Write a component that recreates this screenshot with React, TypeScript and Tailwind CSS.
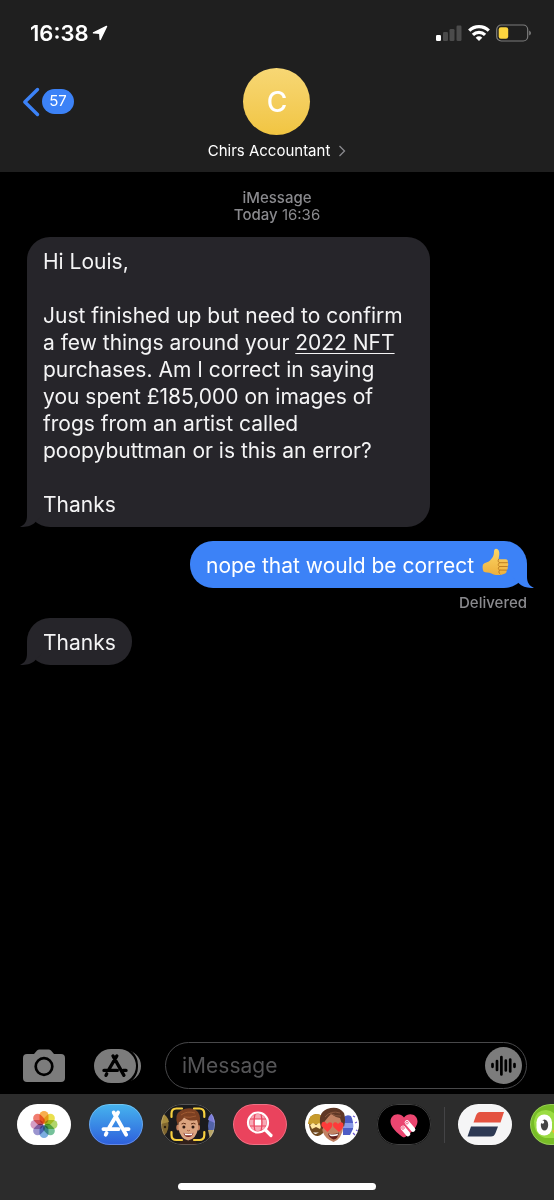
import React from "react";

interface BubbleProps {
  sent?: boolean;
  children: React.ReactNode;
}

function Bubble({ sent = false, children }: BubbleProps) {
  return (
    <div
      className={
        sent
          ? "relative ml-auto w-fit max-w-[403px] rounded-[23px] bg-[#3c82f7] px-4 pt-[11px] pb-[9px] text-[21px] leading-[27px] text-white"
          : "relative w-fit max-w-[403px] rounded-[23px] bg-[#26252a] px-4 pt-[11px] pb-[9px] text-[21px] leading-[27px] text-[#f4f4f5]"
      }
    >
      {children}
      <svg
        viewBox="0 0 24 24"
        aria-hidden="true"
        className={
          sent
            ? "absolute -right-[7px] bottom-0 h-6 w-6 -scale-x-100 text-[#3c82f7]"
            : "absolute -left-[7px] bottom-0 h-6 w-6 text-[#26252a]"
        }
      >
        <path d="M7 0V13C7 18 5 22 0 23.700C6 24.600 12 22.500 15 19.500L22 12V0Z" fill="currentColor" />
      </svg>
    </div>
  );
}

function ThumbsUp() {
  return (
    <svg viewBox="0 0 27 28" role="img" aria-label="thumbs up" className="-mt-1 mr-0.5 ml-2 inline-block h-7 w-[27px] align-top">
      <defs>
        <linearGradient id="thumb" x1="0" y1="0" x2="0" y2="1">
          <stop offset="0" stopColor="#fbd667" />
          <stop offset="1" stopColor="#eeb03c" />
        </linearGradient>
      </defs>
      <path
        d="M1 16.500C2.500 14.500 6 14.500 8 12.500C10.500 10 12 7.500 12 4C12 1.500 13 .7 14.200 .8C16.500 1 17.600 3.500 17.300 6.500L16.600 11.200H23.500C25.500 11.200 26.400 13 25.600 14.600C26.700 15.700 26.500 17.500 25.500 18.400C26.200 19.800 25.800 21.300 24.600 22C25 24 24 25.200 22.500 25.700C19 27.500 13 27.600 9.500 25.500C6.500 24.200 3.500 24.800 1.500 23.500C.5 21.500.3 18.500 1 16.500Z"
        fill="url(#thumb)"
      />
      <path
        d="M16.600 11.200C15.600 12.400 16 14.200 17.600 14.700H25.300M17.600 14.700C15.700 15.400 15.800 17.800 17.500 18.500H25.200M17.500 18.500C15.800 19.300 16 21.500 17.600 22.100H24.400M17.600 22.100C16.400 23 16.500 25 18 26"
        fill="none"
        stroke="#b9781f"
        strokeWidth=".9"
        strokeLinecap="round"
      />
    </svg>
  );
}

function AppStoreGlyph({ color }: { color: string }) {
  return (
    <g stroke={color} strokeWidth="3.600" strokeLinecap="round" fill="none">
      <path d="M2 -11L-6.500 3.500M-9 8.500L-9.800 10.200M-2.200 -11L9.700 10.200M-12 4.800H2.500M9 4.800H12" />
    </g>
  );
}

function StatusBar() {
  return (
    <div className="flex h-[34px] items-center justify-between pr-[23px] pl-[30px]">
      <div className="flex items-center gap-1">
        <span className="text-[22px] leading-6 font-semibold">16:38</span>
        <svg viewBox="0 0 16 16" aria-hidden="true" className="h-4 w-4">
          <path d="M14.500 1.500L1.500 7.800L7.800 8.200L8.200 14.500Z" fill="#fff" stroke="#fff" strokeWidth="1.500" strokeLinejoin="round" />
        </svg>
      </div>
      <div className="flex items-center gap-1.5">
        <svg viewBox="0 0 26 16" aria-label="Signal" role="img" className="h-4 w-[26px]">
          <rect x="0" y="10" width="5" height="6" rx="1.200" fill="#fff" />
          <rect x="7" y="7" width="5" height="9" rx="1.200" fill="#4b4b4b" />
          <rect x="13.500" y="4" width="5" height="12" rx="1.200" fill="#4b4b4b" />
          <rect x="20.500" y="0.500" width="5" height="15.500" rx="1.200" fill="#4b4b4b" />
        </svg>
        <svg viewBox="0 0 22 16" aria-label="Wi-Fi" role="img" className="h-4 w-[22px]">
          <g fill="none" stroke="#fff" strokeWidth="3.200">
            <path d="M1.200 5.700A14 14 0 0 1 20.800 5.700" />
            <path d="M4.900 9.800A8.700 8.700 0 0 1 17.100 9.800" />
          </g>
          <path d="M11 16L7.700 12.700A4.700 4.700 0 0 1 14.300 12.700Z" fill="#fff" />
        </svg>
        <svg viewBox="0 0 35 18" aria-label="Battery" role="img" className="h-[18px] w-[35px]">
          <rect x="0.700" y="1" width="31" height="16" rx="4.500" fill="none" stroke="#7d7d7d" strokeWidth="1.200" />
          <path d="M33.200 6.500Q35 7.500 35 9T33.200 11.500Z" fill="#7d7d7d" />
          <rect x="2.700" y="3.200" width="9.500" height="11.600" rx="2.200" fill="#fcd53f" />
        </svg>
      </div>
    </div>
  );
}

function Header() {
  return (
    <header className="bg-[#1f1f1f] pt-4 pb-[11px] text-white">
      <StatusBar />
      <div className="mt-[18px] grid grid-cols-[1fr_auto_1fr]">
        <button type="button" aria-label="Back, 57 unread" className="flex h-[67px] items-center gap-0.5 justify-self-start pl-[22px]">
          <svg viewBox="0 0 18 30" aria-hidden="true" className="h-[30px] w-[18px]">
            <path d="M15.500 2.500L2.800 15L15.500 27.500" fill="none" stroke="#3c82f7" strokeWidth="3.400" strokeLinecap="round" strokeLinejoin="round" />
          </svg>
          <span className="flex h-[25px] w-8 items-center justify-center rounded-full bg-[#3c82f7] text-[15px]">57</span>
        </button>
        <button type="button" className="flex flex-col items-center">
          <span className="flex h-[67px] w-[67px] items-center justify-center rounded-full bg-linear-to-b from-[#f7d774] to-[#f1c541] text-[28px] font-medium">
            C
          </span>
          <span className="mt-[5px] flex items-center gap-2 text-[15px] leading-[21px]">
            Chirs Accountant
            <svg viewBox="0 0 8 12" aria-hidden="true" className="h-3 w-2">
              <path d="M1.500 1L6.500 6L1.500 11" fill="none" stroke="#8a8a8e" strokeWidth="1.300" />
            </svg>
          </span>
        </button>
      </div>
    </header>
  );
}

function Composer() {
  return (
    <form className="flex items-center pr-[27px] pb-[5px] pl-[23px]" onSubmit={(e) => e.preventDefault()}>
      <button type="button" aria-label="Camera">
        <svg viewBox="0 0 42 33" className="block h-[33px] w-[42px]">
          <path
            d="M4 5H11L14 1.500Q15 .5 16.500 .5H25.500Q27 .5 28 1.500L31 5H38Q42 5 42 9V29Q42 33 38 33H4Q0 33 0 29V9Q0 5 4 5Z"
            fill="#7c7c7c"
          />
          <circle cx="21" cy="17.500" r="8.300" fill="none" stroke="#000" strokeWidth="2.700" />
        </svg>
      </button>
      <button type="button" aria-label="Apps" className="ml-[29px]">
        <svg viewBox="0 0 47 34" className="block h-[34px] w-[47px]">
          <rect x="5" y="1" width="42" height="32" rx="16" fill="#7c7c7c" />
          <rect x="-1" y="-2" width="45" height="38" rx="18" fill="#000" />
          <rect width="42" height="34" rx="17" fill="#7c7c7c" />
          <g transform="translate(21 17) scale(.92)">
            <AppStoreGlyph color="#000" />
          </g>
        </svg>
      </button>
      <div className="ml-6 flex h-[47px] min-w-0 flex-1 items-center rounded-full border border-[#48484a] pr-1 pl-4">
        <input
          type="text"
          aria-label="Message"
          placeholder="iMessage"
          className="min-w-0 flex-1 bg-transparent text-[21px] text-white outline-none placeholder:text-[#555557]"
        />
        <button type="button" aria-label="Record audio">
          <svg viewBox="0 0 37 37" className="block h-[37px] w-[37px]">
            <circle cx="18.500" cy="18.500" r="18.500" fill="#7c7c7c" />
            <path
              d="M7.500 17.200V19.800M12 14V23M16.400 10V27.500M20.800 13.500V23.500M25.200 12.500V24.500M29.500 17.200V19.800"
              stroke="#000"
              strokeWidth="2.700"
              strokeLinecap="round"
            />
          </svg>
        </button>
      </div>
    </form>
  );
}

function PhotosIcon() {
  const petals = ["#f7a335", "#e8dc35", "#a5cf55", "#62b98c", "#6aa3dc", "#8d86c9", "#cf8fbd", "#ee6a5c"];
  return (
    <>
      <rect width="54" height="41" fill="#fff" />
      {petals.map((color, i) => (
        <rect
          key={color}
          x="22.500"
          y="7"
          width="9"
          height="12.800"
          rx="4.500"
          fill={color}
          opacity=".88"
          transform={`rotate(${i * 45} 27 20.500)`}
          className="mix-blend-multiply"
        />
      ))}
    </>
  );
}

function AppStoreIcon() {
  return (
    <>
      <defs>
        <linearGradient id="store" x1="0" y1="0" x2="0" y2="1">
          <stop offset="0" stopColor="#46b4ee" />
          <stop offset="1" stopColor="#2e5fdc" />
        </linearGradient>
      </defs>
      <rect width="54" height="41" fill="url(#store)" />
      <g transform="translate(27 20) scale(1.050)">
        <AppStoreGlyph color="#fff" />
      </g>
    </>
  );
}

function MemojiCameraIcon() {
  return (
    <>
      <rect width="54" height="41" fill="#1b1b1d" />
      <ellipse cx="1" cy="21" rx="6.500" ry="11" fill="#80672f" />
      <path d="M0 10Q6 10 8 18L0 20Z" fill="#a68b3e" />
      <circle cx="4" cy="23" r="1.200" fill="#2c2010" />
      <ellipse cx="52.500" cy="22" rx="5.500" ry="10" fill="#5263a9" />
      <path d="M47 16Q48 9 54 9V19Z" fill="#7b7cd8" />
      <path d="M47 26H54V35H49Z" fill="#b7a465" />
      <path d="M20 35Q27 31 34 35L36 41H18Z" fill="#32201a" />
      <ellipse cx="17" cy="23.500" rx="1.700" ry="3" fill="#c5805f" />
      <ellipse cx="37.300" cy="23.500" rx="1.700" ry="3" fill="#c5805f" />
      <path d="M17.500 17Q18 11 27 11T37 17V25Q35 35 27.200 36.500Q19.500 35 17.500 25Z" fill="#dba480" />
      <path d="M16.500 21Q13 10 20 6.500Q30 1.500 37 8Q40.500 13 38 22Q36.800 19 36 16Q28 18 23 13.500Q21 17 18.500 18Q17 18 16.500 21Z" fill="#7c4022" />
      <path d="M20 11Q26 6.500 34 9M23 13Q29 14 35 12" fill="none" stroke="#a05a32" strokeWidth="1" />
      <path d="M20.500 20Q22.500 18.500 25 20M30 20Q32.500 18.500 34.500 20" fill="none" stroke="#643119" strokeWidth="1" />
      <circle cx="22.900" cy="23" r="1.500" fill="#301a12" />
      <circle cx="32" cy="23" r="1.500" fill="#301a12" />
      <path d="M26 26.200Q27.500 27.500 29 26.200" fill="none" stroke="#a95f45" strokeWidth="1" />
      <path d="M22.500 28.800Q27.500 30.500 32.500 28.800Q31.500 33 27.300 33T22.500 28.800Z" fill="#7c2823" />
      <path d="M23.300 29.200Q27.500 30.700 31.700 29.200L30.800 31.200H24.200Z" fill="#fff" />
      <path
        d="M10.500 13V9.500Q10.500 4.500 15.500 4.500H21M33 4.500H38.300Q43.300 4.500 43.300 9.500V13M43.300 28V31Q43.300 36 38.300 36H33M21 36H15.500Q10.500 36 10.500 31V28"
        fill="none"
        stroke="#f6cf3f"
        strokeWidth="2.200"
        strokeLinecap="round"
      />
    </>
  );
}

function ImagesIcon() {
  return (
    <>
      <rect width="54" height="41" fill="#ea435d" />
      <circle cx="25" cy="18.500" r="8.500" fill="#f7a9b5" />
      <path d="M22 15H28V22H22Z" fill="#fff" />
      <path d="M22 10Q20 18.500 22 27M28 10Q30 18.500 28 27M17 15H33M17 22H33" fill="none" stroke="#ea435d" strokeWidth="1.200" />
      <circle cx="25" cy="18.500" r="10" fill="none" stroke="#fff" strokeWidth="2.200" />
      <path d="M32.500 26L38 31.500" stroke="#fff" strokeWidth="3.200" strokeLinecap="round" />
    </>
  );
}

function MemojiStickersIcon() {
  return (
    <>
      <rect width="54" height="41" fill="#fff" />
      <path d="M4 19Q3 12 11 10Q18 10 19 20V28Q14 34 9 31Q4 27 4 19Z" fill="#70491f" />
      <path d="M3 19Q4 10 12 10Q18 10 19 18L17 20H3Z" fill="#c79b2c" />
      <path d="M5 21L8 19L11 21L14 19L17 21L15 25L11 23L7 25Z" fill="#ffe6a0" />
      <path d="M8 28Q11 29 14 28Q12 30 10 30Z" fill="#fff" />
      <path d="M38 14Q41 10 46 12Q49 18 48 25L45 31H38Z" fill="#4e5dc6" />
      <path d="M38 19H48V24H38Z" fill="#8b9de9" />
      <path d="M48 12L50 13M50 19L52 18M51 26L53 27M48 29L50 31" stroke="#7058d1" strokeWidth="1.300" />
      <path d="M17 18Q17 9 28 9Q39 10 38.500 22Q37 35 28.500 38Q20 35 17.500 27Z" fill="#c28263" />
      <path d="M16 24Q12 9 22 5Q33 1 39 9Q41 15 39 23Q36 19 35 14Q30 13 26 10Q23 13 20 17Q18 19 18 25Z" fill="#5f3826" />
      <path d="M20 13Q26 6 35 9M25 9Q31 13 36 12" fill="none" stroke="#8a583f" strokeWidth="1" />
      <path d="M22.500 28L16.500 22Q16 18 19 17.800Q21 18 22 20Q24 17 27 19Q29 22 22.500 28Z" fill="#ff3b3a" />
      <path d="M34 28L28.500 23Q27 19 30 18.300Q32 18 33 20Q35 17 38 19Q40 23 34 28Z" fill="#ff3b3a" />
      <path d="M23 29.500Q29 31 34 28.500Q33 35 28.500 35.500Q24 34 23 29.500Z" fill="#65211e" />
      <path d="M24 30Q29 31.300 33.300 29.500L32.500 31.500Q28 33 25 31.800Z" fill="#fff" />
    </>
  );
}

function DigitalTouchIcon() {
  return (
    <>
      <rect width="54" height="41" fill="#000" />
      <path
        d="M27 33.500C25 33 13.500 24.500 13.500 17.500C13.500 10 22.500 7.500 27 13.500C31.500 7.500 40.500 10 40.500 17.500C40.500 24.500 29 33 27 33.500Z"
        fill="#eb4670"
      />
      <g strokeLinecap="round" stroke="#fff">
        <path d="M30 18.500L36 25.500" strokeWidth="4.700" />
        <path d="M26 24L31 30" strokeWidth="4.700" />
      </g>
      <circle cx="30" cy="18.700" r="1.300" fill="none" stroke="#eb4670" strokeWidth=".8" />
      <circle cx="26" cy="24" r="1.300" fill="none" stroke="#eb4670" strokeWidth=".8" />
    </>
  );
}

function StripesIcon() {
  return (
    <>
      <rect width="54" height="41" fill="#f5f5f6" />
      <path d="M22 8H46L42.500 18.500H15.500L18 11.500Q19.300 8 22 8Z" fill="#e45341" />
      <path d="M13 22.500H40L37.500 29Q36.200 32.500 33 32.500H9.500Z" fill="#2d3953" />
    </>
  );
}

function OwlIcon() {
  return (
    <>
      <rect width="54" height="41" fill="#78bd27" />
      <path d="M4 17Q6 6 16 6Q24 7 27 13Q30 7 38 6Q49 7 50 18Q50 32 38 34H15Q4 31 4 17Z" fill="#9bdc42" />
      <rect x="6.500" y="10.500" width="15.500" height="21" rx="7.700" fill="#fff" />
      <rect x="32" y="10.500" width="15.500" height="21" rx="7.700" fill="#fff" />
      <ellipse cx="14.500" cy="21" rx="3.700" ry="5.500" fill="#454545" />
      <ellipse cx="39" cy="21" rx="3.700" ry="5.500" fill="#454545" />
      <circle cx="12.500" cy="18" r="1.700" fill="#fff" />
      <path d="M22 27Q27 22 32 27L27 33Z" fill="#f3b52b" />
    </>
  );
}

function AppButton({ label, children }: { label: string; children: React.ReactNode }) {
  return (
    <button type="button" aria-label={label} className="relative h-[41px] w-[54px] shrink-0 overflow-hidden rounded-full">
      <svg viewBox="0 0 54 41" className="block h-full w-full">
        {children}
        <rect x=".5" y=".5" width="53" height="40" rx="20" fill="none" stroke="#fff" strokeOpacity=".25" />
      </svg>
    </button>
  );
}

function AppDrawer() {
  return (
    <nav aria-label="iMessage apps" className="overflow-hidden bg-[#2c2c2c] pt-2.5 pb-2.5">
      <div className="flex items-center pl-[17px]">
        <div className="flex shrink-0 gap-[18px]">
          <AppButton label="Photos"><PhotosIcon /></AppButton>
          <AppButton label="App Store"><AppStoreIcon /></AppButton>
          <AppButton label="Memoji"><MemojiCameraIcon /></AppButton>
          <AppButton label="Images"><ImagesIcon /></AppButton>
          <AppButton label="Memoji Stickers"><MemojiStickersIcon /></AppButton>
          <AppButton label="Digital Touch"><DigitalTouchIcon /></AppButton>
        </div>
        <div className="mx-[13px] h-9 w-px shrink-0 bg-[#444446]" />
        <div className="flex shrink-0 gap-[18px]">
          <AppButton label="Sports"><StripesIcon /></AppButton>
          <AppButton label="Owl Stickers"><OwlIcon /></AppButton>
        </div>
      </div>
      <div className="mx-auto mt-[38px] h-[7px] w-[198px] rounded-full bg-white" />
    </nav>
  );
}

export default function App() {
  return (
    <div className="flex min-h-screen flex-col bg-black font-['Inter','Liberation_Sans',sans-serif]">
      <Header />
      <main className="flex-1 px-[27px] pt-[17px]">
        <div className="mb-3.5 text-center text-[15px] leading-[17px] text-[#8a8a8e]">
          <p className="font-medium">iMessage</p>
          <p>
            <span className="font-medium">Today</span> 16:36
          </p>
        </div>
        <Bubble>
          <p>Hi Louis,</p>
          <p className="my-[27px]">
            Just finished up but need to confirm a few things around your{" "}
            <a href="#event" className="underline decoration-1 underline-offset-3">2022 NFT</a> purchases. Am I correct in
            saying you spent £185,000 on images of frogs from an artist called poopybuttman or is this an error?
          </p>
          <p>Thanks</p>
        </Bubble>
        <div className="mt-3.5">
          <Bubble sent>
            nope that would be correct
            <ThumbsUp />
          </Bubble>
          <p className="mt-1.5 text-right text-[15px] leading-[17px] font-medium text-[#8a8a8e]">Delivered</p>
        </div>
        <div className="mt-[7px]">
          <Bubble>Thanks</Bubble>
        </div>
      </main>
      <Composer />
      <AppDrawer />
    </div>
  );
}
